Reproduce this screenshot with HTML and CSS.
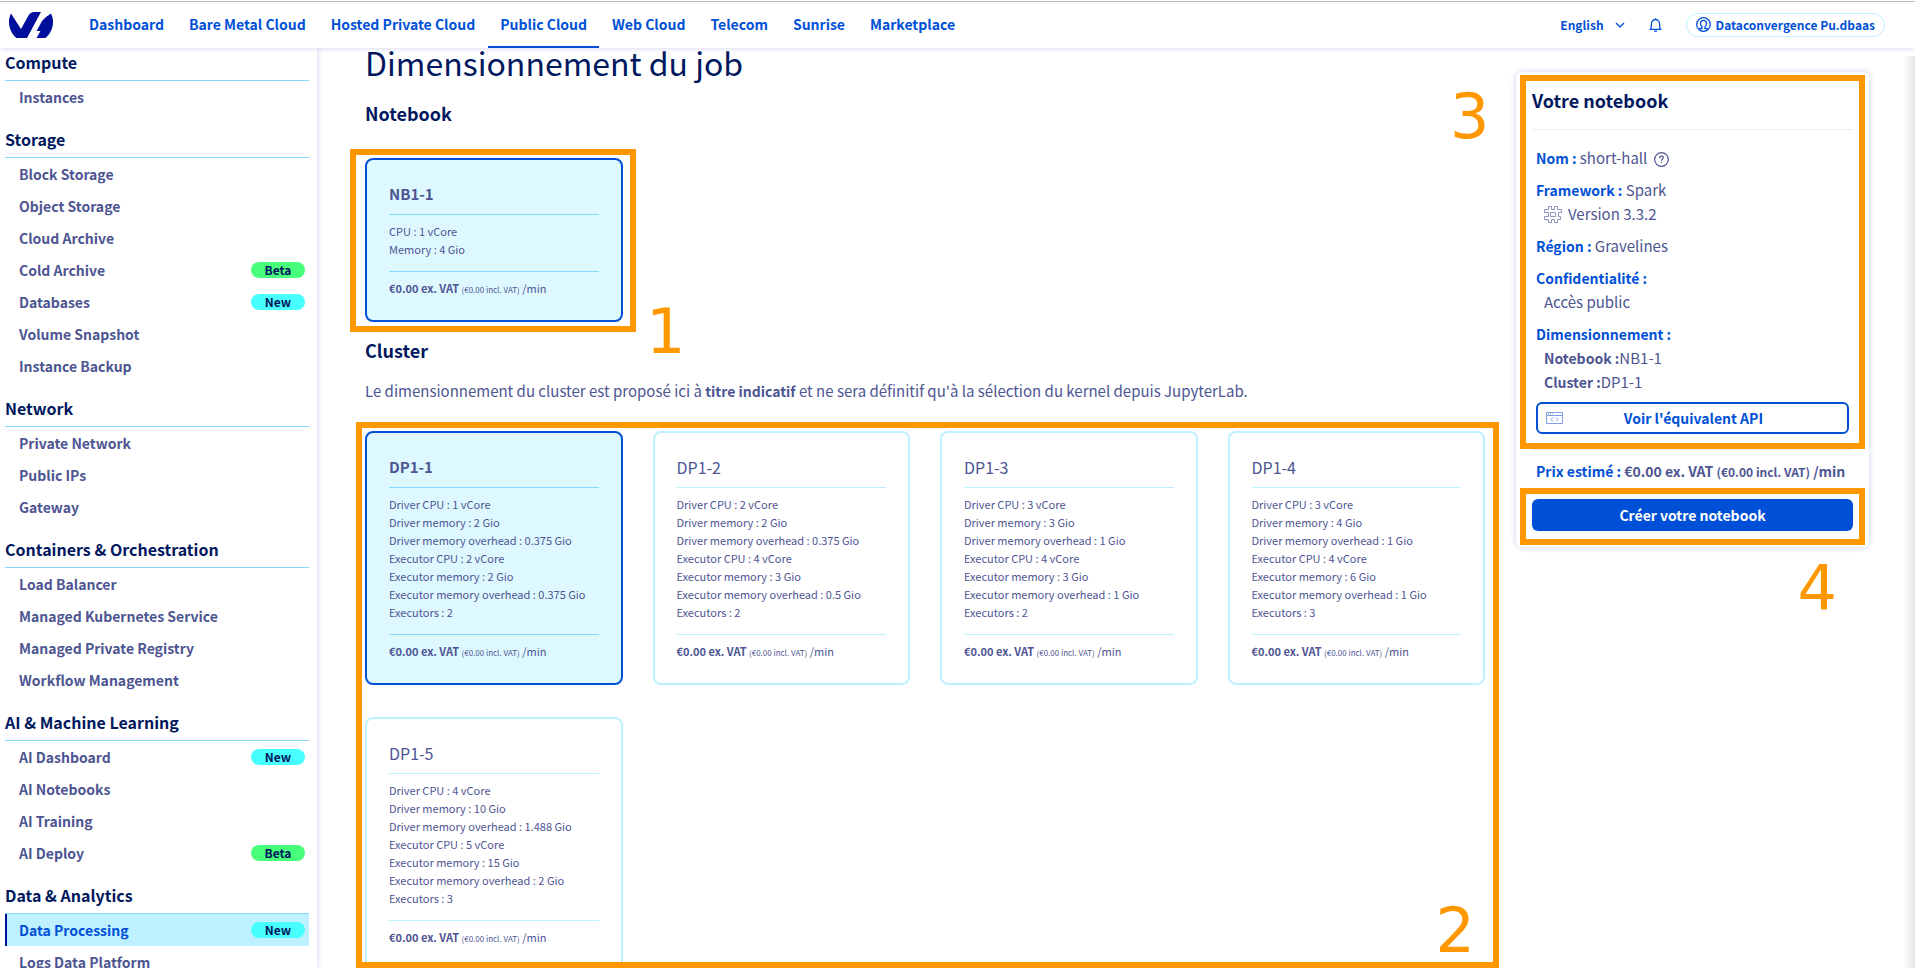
FILE: index.html
```html
<!DOCTYPE html>
<html lang="fr">
<head>
<meta charset="utf-8">
<title>Data Processing - Notebook</title>
<link rel="stylesheet" href="styles.css">
</head>
<body>
<header class="topbar">
  <a class="logo" href="#" aria-label="OVHcloud">
    <svg width="44" height="26" viewBox="0 0 44 26" aria-hidden="true"><path fill="#000e9c" d="M2 1.500 12 17 19.500 3.500Q21.500 0 25 0H32L18 26H7.500C0 20-2 9 2 1.500ZM42 1.500Q36 5 33 9L27.500 19H31.500L27.500 26H36.500C44 20 46 9 42 1.500Z"/></svg>
  </a>
  <nav class="nav">
    <a href="#">Dashboard</a><a href="#">Bare Metal Cloud</a><a href="#">Hosted Private Cloud</a><a href="#" class="active">Public Cloud</a><a href="#">Web Cloud</a><a href="#">Telecom</a><a href="#">Sunrise</a><a href="#">Marketplace</a>
  </nav>
  <div class="tools">
    <button class="lang" type="button">English
      <svg width="10" height="6" viewBox="0 0 10 6" aria-hidden="true"><path d="M1 1 5 5 9 1" fill="none" stroke="currentColor" stroke-width="1.300"/></svg>
    </button>
    <button class="bell" type="button" aria-label="Notifications">
      <svg width="13" height="14" viewBox="0 0 13 14" aria-hidden="true"><path d="M.500 11.400H12.500M2 11.400 2.500 5.500A4 4 0 0 1 10.500 5.500L11 11.400M5 13.200H8M6.500 .300V1.500" fill="none" stroke="currentColor" stroke-width="1.300"/></svg>
    </button>
    <button class="account" type="button">
      <svg width="15" height="15" viewBox="0 0 15 15" aria-hidden="true"><g fill="none" stroke="currentColor" stroke-width="1.300"><circle cx="7.500" cy="7.500" r="6.800"/><path d="M4 12.500V11.500H6V9.500C3.500 8 4 3.300 7.500 3.300S11.500 8 9 9.500V11.500H11V12.500"/></g></svg>
      Dataconvergence Pu.dbaas
    </button>
  </div>
</header>
<div class="shell">
  <aside class="sidebar">
    <section><h2>Compute</h2><ul>
      <li><a href="#">Instances</a></li></ul></section>
    <section><h2>Storage</h2><ul>
      <li><a href="#">Block Storage</a></li>
      <li><a href="#">Object Storage</a></li>
      <li><a href="#">Cloud Archive</a></li>
      <li><a href="#">Cold Archive<span class="badge beta">Beta</span></a></li>
      <li><a href="#">Databases<span class="badge new">New</span></a></li>
      <li><a href="#">Volume Snapshot</a></li>
      <li><a href="#">Instance Backup</a></li></ul></section>
    <section><h2>Network</h2><ul>
      <li><a href="#">Private Network</a></li>
      <li><a href="#">Public IPs</a></li>
      <li><a href="#">Gateway</a></li></ul></section>
    <section><h2>Containers &amp; Orchestration</h2><ul>
      <li><a href="#">Load Balancer</a></li>
      <li><a href="#">Managed Kubernetes Service</a></li>
      <li><a href="#">Managed Private Registry</a></li>
      <li><a href="#">Workflow Management</a></li></ul></section>
    <section><h2>AI &amp; Machine Learning</h2><ul>
      <li><a href="#">AI Dashboard<span class="badge new">New</span></a></li>
      <li><a href="#">AI Notebooks</a></li>
      <li><a href="#">AI Training</a></li>
      <li><a href="#">AI Deploy<span class="badge beta">Beta</span></a></li></ul></section>
    <section><h2>Data &amp; Analytics</h2><ul>
      <li><a href="#" class="current">Data Processing<span class="badge new">New</span></a></li>
      <li><a href="#">Logs Data Platform</a></li></ul></section>
  </aside>
  <main class="main">
    <div class="content">
      <h1>Dimensionnement du job</h1>
      <h2>Notebook</h2>
      <div class="grid first">
        <div class="card selected">
          <h3>NB1-1</h3>
          <ul><li>CPU : 1 vCore</li><li>Memory : 4 Gio</li></ul>
          <p class="price"><strong>€0.00 ex. VAT</strong> <small>(€0.00 incl. VAT)</small> /min</p>
          <div class="frame frame-1"></div>
          <span class="mark mark-1">1</span>
        </div>
      </div>
      <h2 class="cluster">Cluster</h2>
      <p class="intro">Le dimensionnement du cluster est proposé ici à <strong>titre indicatif</strong> et ne sera définitif qu'à la sélection du kernel depuis JupyterLab.</p>
      <div class="grid">
        <div class="card selected">
          <h3>DP1-1</h3>
          <ul><li>Driver CPU : 1 vCore</li><li>Driver memory : 2 Gio</li><li>Driver memory overhead : 0.375 Gio</li><li>Executor CPU : 2 vCore</li><li>Executor memory : 2 Gio</li><li>Executor memory overhead : 0.375 Gio</li><li>Executors : 2</li></ul>
          <p class="price"><strong>€0.00 ex. VAT</strong> <small>(€0.00 incl. VAT)</small> /min</p>
        </div>
        <div class="card">
          <h3>DP1-2</h3>
          <ul><li>Driver CPU : 2 vCore</li><li>Driver memory : 2 Gio</li><li>Driver memory overhead : 0.375 Gio</li><li>Executor CPU : 4 vCore</li><li>Executor memory : 3 Gio</li><li>Executor memory overhead : 0.5 Gio</li><li>Executors : 2</li></ul>
          <p class="price"><strong>€0.00 ex. VAT</strong> <small>(€0.00 incl. VAT)</small> /min</p>
        </div>
        <div class="card">
          <h3>DP1-3</h3>
          <ul><li>Driver CPU : 3 vCore</li><li>Driver memory : 3 Gio</li><li>Driver memory overhead : 1 Gio</li><li>Executor CPU : 4 vCore</li><li>Executor memory : 3 Gio</li><li>Executor memory overhead : 1 Gio</li><li>Executors : 2</li></ul>
          <p class="price"><strong>€0.00 ex. VAT</strong> <small>(€0.00 incl. VAT)</small> /min</p>
        </div>
        <div class="card">
          <h3>DP1-4</h3>
          <ul><li>Driver CPU : 3 vCore</li><li>Driver memory : 4 Gio</li><li>Driver memory overhead : 1 Gio</li><li>Executor CPU : 4 vCore</li><li>Executor memory : 6 Gio</li><li>Executor memory overhead : 1 Gio</li><li>Executors : 3</li></ul>
          <p class="price"><strong>€0.00 ex. VAT</strong> <small>(€0.00 incl. VAT)</small> /min</p>
        </div>
        <div class="card">
          <h3>DP1-5</h3>
          <ul><li>Driver CPU : 4 vCore</li><li>Driver memory : 10 Gio</li><li>Driver memory overhead : 1.488 Gio</li><li>Executor CPU : 5 vCore</li><li>Executor memory : 15 Gio</li><li>Executor memory overhead : 2 Gio</li><li>Executors : 3</li></ul>
          <p class="price"><strong>€0.00 ex. VAT</strong> <small>(€0.00 incl. VAT)</small> /min</p>
        </div>
      </div>
    </div>
    <aside class="summary">
      <h2>Votre notebook</h2>
      <div class="details">
        <p><b>Nom :</b> short-hall <svg class="help" width="15" height="15" viewBox="0 0 15 15" aria-hidden="true"><g fill="none" stroke="currentColor" stroke-width="1.200"><circle cx="7.500" cy="7.500" r="6.800"/><path d="M5.600 6.200C5.600 3.300 9.500 3.500 9.300 5.800C9.200 7 7.500 7 7.500 8.700M7.500 9.800V11.100"/></g></svg></p>
        <div class="group">
          <p><b>Framework :</b> Spark</p>
          <p class="sub version"><svg width="18" height="17" viewBox="0 0 18 17" aria-hidden="true"><path d="M4.500 .500H7.500V3.500H10.500V.500H13.500V3.500H17.500V6.500H14.500V10.500H16.500V13.500H13.500V16.500H10.500V13.500H7.500V16.500H4.500V13.500H.500V10.500H4.500V6.500H.500V3.500H4.500ZM6.500 6.500H11.500V10.500H6.500Z" fill="none" stroke="#9094bd"/></svg>Version 3.3.2</p>
        </div>
        <p><b>Région :</b> Gravelines</p>
        <div class="group">
          <p><b>Confidentialité :</b></p>
          <p class="sub">Accès public</p>
        </div>
        <div class="group">
          <p><b>Dimensionnement :</b></p>
          <p class="sub"><strong>Notebook :</strong>NB1-1</p>
          <p class="sub"><strong>Cluster :</strong>DP1-1</p>
        </div>
        <button class="api" type="button"><svg width="17" height="12" viewBox="0 0 17 12" aria-hidden="true"><path d="M.500 .500H16.500V11.500H.500ZM.500 3.500H16.500M2 2H3M4 2H5M6 2H7M7 5.500 5 7.500 7 9.500M10 5.500 12 7.500 10 9.500" fill="none" stroke="#7f9fe8"/></svg>Voir l'équivalent API</button>
      </div>
      <p class="total"><b>Prix estimé :</b> <strong>€0.00 ex. VAT <small>(€0.00 incl. VAT)</small> /min</strong></p>
      <button class="create" type="button">Créer votre notebook</button>
      <div class="frame frame-3"></div>
      <div class="frame frame-4"></div>
      <span class="mark mark-3">3</span>
      <span class="mark mark-4">4</span>
    </aside>
    <div class="frame frame-2"></div>
    <span class="mark mark-2">2</span>
  </main>
</div>
</body>
</html>
```
FILE: styles.css
```css
* { box-sizing: border-box; }
body, h1, h2, h3, p, ul { margin: 0; padding: 0; }
ul { list-style: none; }
a { text-decoration: none; color: inherit; }
button { font: inherit; background: none; border: 0; padding: 0; color: inherit; cursor: pointer; }
svg { flex: none; display: block; }
small { line-height: 1; }

body {
  height: 100vh;
  display: flex;
  flex-direction: column;
  overflow: hidden;
  background: #fff;
  color: #4d5592;
  font: 14px/24px "Noto Sans CJK SC", "Noto Sans", sans-serif;
}

.topbar {
  flex: none;
  position: relative;
  z-index: 2;
  display: flex;
  height: 48px;
  padding: 0 30px 0 9px;
  border-top: 1px solid #fff;
  background: #fff;
  box-shadow: 0 0 6px rgba(0, 14, 156, 0.2), inset 0 1px 0 #bbb;
  color: #0050d7;
  font-weight: 700;
}
.logo { display: flex; align-items: center; width: 68px; }
.nav { display: flex; gap: 1px; }
.nav a { padding: 11px 12px 0; }
.nav .active { border-bottom: 2px solid #0050d7; }
.tools { display: flex; align-items: center; margin-left: auto; font-size: 12px; }
.lang { display: flex; align-items: center; gap: 11px; }
.bell { margin: 0 24px; }
.account {
  display: flex;
  align-items: center;
  gap: 5px;
  height: 24px;
  padding: 0 9px;
  border: 1px solid #bef1ff;
  border-radius: 12px;
}

.shell { flex: 1; min-height: 0; display: flex; }

.sidebar {
  flex: none;
  width: 317px;
  padding: 0 8px 0 5px;
  overflow: hidden;
  box-shadow: 0 0 6px rgba(0, 14, 156, 0.2);
}
.sidebar section + section { margin-top: 12px; }
.sidebar h2 {
  padding-bottom: 4px;
  border-bottom: 1px solid #85d9fd;
  color: #00185e;
  font-size: 16px;
  line-height: 28px;
}
.sidebar a {
  display: flex;
  align-items: center;
  justify-content: space-between;
  height: 32px;
  padding: 0 4px 0 12px;
  border-left: 2px solid transparent;
  font-weight: 700;
}
.sidebar .current { background: #bef1ff; border-color: #000e9c; color: #0050d7; }
.badge {
  width: 54px;
  border-radius: 8px;
  color: #00185e;
  font-size: 12px;
  font-weight: 700;
  line-height: 16px;
  text-align: center;
}
.beta { background: #47ff7b; }
.new { background: #47ffff; }

.main {
  flex: 1;
  min-width: 0;
  position: relative;
  display: grid;
  grid-template-columns: minmax(0, 1fr) 353px;
  align-items: start;
  gap: 31px;
  padding: 0 46px 0 48px;
  overflow: hidden;
}
.main::after {
  content: "";
  position: absolute;
  inset: 8px 0 0 auto;
  width: 12px;
  background: linear-gradient(to right, rgba(0, 0, 0, 0), rgba(0, 0, 0, 0.1));
}
h1, .content h2, .summary h2 { color: #00185e; }
h1 { font-size: 32px; font-weight: 400; line-height: 28px; }
.content h2 { margin: 25px 0 33px; font-size: 18px; line-height: 24px; }
.content .cluster { margin: 16px 0 17px; }
.intro { margin-bottom: 28px; font-size: 15px; }
.intro strong { font-size: 14px; }

.grid { display: grid; grid-template-columns: repeat(4, minmax(0, 1fr)); gap: 32px 30px; }
.card {
  position: relative;
  padding: 22px;
  border: 2px solid #bef1ff;
  border-radius: 8px;
  font-size: 11px;
  line-height: 18px;
}
.card h3 { padding-bottom: 8px; font-size: 16px; font-weight: 400; line-height: 24px; }
.card ul { padding: 7px 0 13px; border: 1px solid #bef1ff; border-width: 1px 0; }
.card .price { padding: 7px 0 1px; }
.card small { font-size: 8px; }
.selected { border-color: #0050d7; background: #def8ff; }
.card.selected h3 { font-size: 15px; font-weight: 700; }
.card.selected ul { border-color: #85d9fd; }

.summary {
  position: relative;
  margin-top: 24px;
  padding: 16px;
  border-radius: 6px;
  box-shadow: 0 0 6px rgba(0, 14, 156, 0.2);
}
.summary h2 { padding-bottom: 17px; border-bottom: 1px solid #eee; font-size: 18px; line-height: 24px; }
.summary b { color: #0050d7; font-size: 14px; font-weight: 700; }
.details {
  display: flex;
  flex-direction: column;
  gap: 8px;
  padding: 16px 4px 15px;
  border-bottom: 1px solid #eee;
  font-size: 15px;
}
.details strong { font-size: 14px; }
.sub { padding-left: 8px; }
.version { display: flex; align-items: center; gap: 6px; }
.help { display: inline-block; margin-left: 3px; vertical-align: -3px; }
.api {
  display: flex;
  align-items: center;
  height: 32px;
  padding: 0 84px 0 8px;
  border: 2px solid #0050d7;
  border-radius: 6px;
  color: #0050d7;
  font-size: 14px;
  font-weight: 700;
}
.api svg { margin-right: auto; }
.total { padding: 9px 4px 16px; }
.total small { font-size: 12px; }
.create {
  width: 100%;
  height: 32px;
  border-radius: 6px;
  background: #0050d7;
  color: #fff;
  font-weight: 700;
}

/* Numbered callouts drawn over the page */
.frame { position: absolute; border: 6px solid #ff9800; pointer-events: none; }
.frame-1 { inset: -11px -15px -12px -17px; }
.frame-2 { inset: 374px 416px 0 39px; }
.frame-3 { inset: 3px 4px 98px 4px; }
.frame-4 { inset: 416px 4px 2px 4px; }
.mark {
  position: absolute;
  color: #ff9800;
  font: 62px/62px "DejaVu Sans", sans-serif;
}
.mark-1 { left: 279px; top: 141px; }
.mark-2 { right: 440px; bottom: 6px; }
.mark-3 { left: -66px; top: 14px; }
.mark-4 { right: 32px; top: 486px; }
```
